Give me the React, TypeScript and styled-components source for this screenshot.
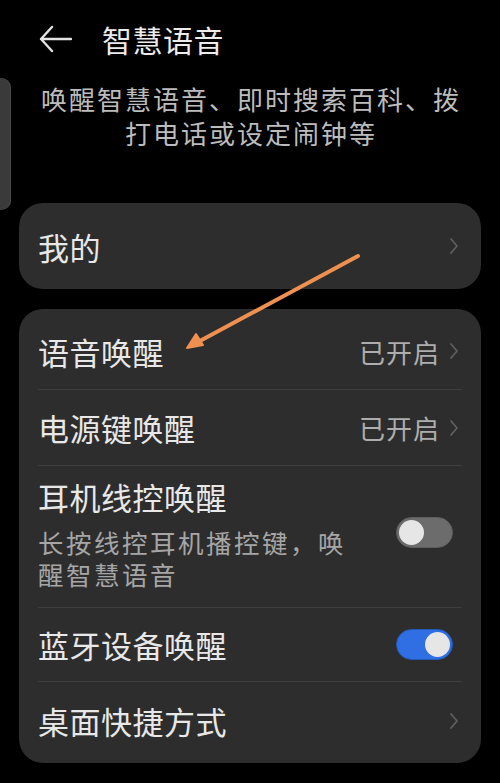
import React from 'react';
import styled, { createGlobalStyle } from 'styled-components';

const GlobalStyle = createGlobalStyle`
    html, body {
        margin: 0;
        padding: 0;
        background: #000;
    }
    body {
        font-family: "Noto Sans CJK SC", "Noto Sans", sans-serif;
        color: #e6e6e6;
    }
`;

const Page = styled.div`
    position: relative;
    width: 500px;
    height: 783px;
    overflow: hidden;
    background: #000;
`;

const Header = styled.div`
    display: flex;
    align-items: center;
    height: 54px;
    padding: 12px 0 0 38px;
    gap: 30px;
`;

const BackButton = styled.div`
    display: flex;
    align-items: center;
    width: 34px;
    height: 30px;
`;

const Title = styled.h1`
    margin: 0;
    font-size: 30px;
    font-weight: 400;
    color: #ececec;
    letter-spacing: 0.5px;
`;

const Intro = styled.p`
    margin: 16px 0 0 0;
    padding: 0 36px 0 38px;
    text-align: center;
    font-size: 26px;
    line-height: 34px;
    letter-spacing: 2px;
    color: #bcbcbc;
`;

const SideHandle = styled.div`
    position: absolute;
    left: 0;
    top: 78px;
    width: 11px;
    height: 132px;
    background: #3a3a3a;
    border-radius: 0 10px 10px 0;
    box-shadow: inset -1px 0 0 #4a4a4a;
`;

const Card = styled.div`
    margin: 0 19px;
    background: #2d2d2d;
    border-radius: 24px;
    padding: 4px 19px;
`;

const Stack = styled.div`
    display: flex;
    flex-direction: column;
    gap: 20px;
    margin-top: 53px;
`;

const Row = styled.div<{ $tall?: boolean; $h?: number }>`
    display: flex;
    align-items: center;
    justify-content: space-between;
    min-height: ${(p) => p.$h ?? 75}px;
    padding: ${(p) => (p.$tall ? '8px 0 16px' : '0')};
    box-sizing: border-box;
    & + & {
        border-top: 1px solid #3e3e3e;
    }
`;

const TextBlock = styled.div`
    display: flex;
    flex-direction: column;
    align-self: flex-start;
    max-width: 330px;
`;

const Label = styled.span`
    font-size: 31px;
    line-height: 45px;
    letter-spacing: 0.5px;
    color: #e8e8e8;
`;

const Desc = styled.span`
    margin-top: 7px;
    font-size: 25.5px;
    line-height: 32px;
    letter-spacing: 2.5px;
    color: #a6a6a6;
`;

const Trail = styled.div`
    display: flex;
    align-items: center;
    gap: 8px;
`;

const Value = styled.span`
    font-size: 26px;
    letter-spacing: 1px;
    color: #adadad;
`;

const Switch = styled.div<{ $on?: boolean }>`
    position: relative;
    width: 57px;
    height: 31px;
    margin-right: 9px;
    border-radius: 16px;
    box-sizing: border-box;
    background: ${(p) => (p.$on ? '#2f6fe3' : '#6c6c6c')};
    border: 1.5px solid ${(p) => (p.$on ? '#2359b8' : '#5e5e5e')};
    &::after {
        content: '';
        position: absolute;
        top: 1.5px;
        ${(p) => (p.$on ? 'right: 2px;' : 'left: 2px;')}
        width: 25px;
        height: 25px;
        border-radius: 50%;
        background: #e6e6e6;
    }
`;

const ArrowOverlay = styled.svg`
    position: absolute;
    left: 0;
    top: 0;
    pointer-events: none;
`;

const ChevronIcon = styled.svg`
    margin-right: 2px;
`;

const Chevron = () => (
    <ChevronIcon width="12" height="18" viewBox="0 0 12 18">
        <path d="M3 2 L9 9 L3 16" fill="none" stroke="#5f5f5f" strokeWidth="1.8" strokeLinecap="round" strokeLinejoin="round" />
    </ChevronIcon>
);

const App: React.FC = () => {
    return (
        <Page>
            <GlobalStyle />
            <SideHandle />
            <Header>
                <BackButton>
                    <svg width="34" height="28" viewBox="0 0 34 28">
                        <path d="M14 2 L3 14 L14 26 M3 14 H33" fill="none" stroke="#e2e2e2" strokeWidth="2.4" strokeLinecap="round" strokeLinejoin="round" />
                    </svg>
                </BackButton>
                <Title>智慧语音</Title>
            </Header>
            <Intro>唤醒智慧语音、即时搜索百科、拨打电话或设定闹钟等</Intro>
            <Stack>
                <Card>
                    <Row $h={78}>
                        <Label>我的</Label>
                        <Chevron />
                    </Row>
                </Card>
                <Card>
                    <Row $h={76}>
                        <Label>语音唤醒</Label>
                        <Trail>
                            <Value>已开启</Value>
                            <Chevron />
                        </Trail>
                    </Row>
                    <Row $h={76}>
                        <Label>电源键唤醒</Label>
                        <Trail>
                            <Value>已开启</Value>
                            <Chevron />
                        </Trail>
                    </Row>
                    <Row $tall $h={142}>
                        <TextBlock>
                            <Label>耳机线控唤醒</Label>
                            <Desc>长按线控耳机播控键，唤醒智慧语音</Desc>
                        </TextBlock>
                        <Switch />
                    </Row>
                    <Row $h={74}>
                        <Label>蓝牙设备唤醒</Label>
                        <Switch $on />
                    </Row>
                    <Row $h={78}>
                        <Label>桌面快捷方式</Label>
                        <Chevron />
                    </Row>
                </Card>
                <Card>
                    <Row>
                        <Label>&nbsp;</Label>
                    </Row>
                </Card>
            </Stack>
            <ArrowOverlay width="500" height="783" viewBox="0 0 500 783">
                <line x1="358" y1="256" x2="198" y2="342" stroke="#ee9150" strokeWidth="4" strokeLinecap="round" />
                <path d="M187 348 L196 334 L203 345 Z" fill="#ee9150" stroke="#ee9150" strokeWidth="2" strokeLinejoin="round" />
            </ArrowOverlay>
        </Page>
    );
};

export default App;
